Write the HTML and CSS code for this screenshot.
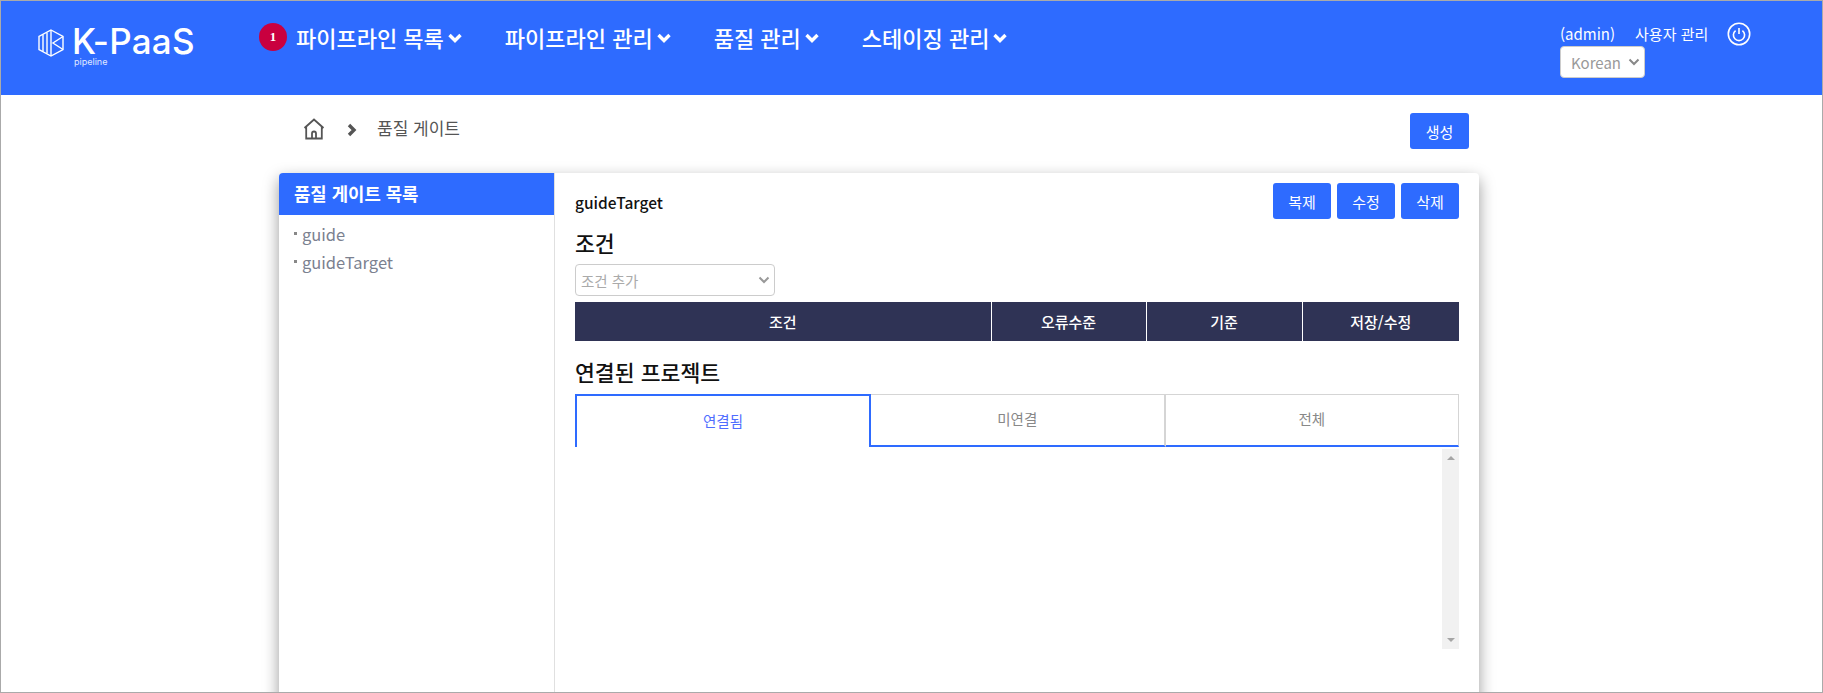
FILE: index.html
```html
<!DOCTYPE html>
<html lang="ko">
<head>
<meta charset="UTF-8">
<meta name="viewport" content="width=device-width, initial-scale=1.0">
<title>품질 게이트</title>
<link rel="stylesheet" href="styles.css">
</head>
<body>

<div class="frame">
    <header class="topbar">
        <a class="logo">
            <svg class="logo-mark" width="26" height="28" viewBox="0 0 26 28" fill="none" stroke="#fff" stroke-width="1.4">
                <path d="M13 1 L25 7.5 V20.5 L13 27 L1 20.5 V7.5 Z"/>
                <path d="M5 5.5 V22.5 M9 3.5 V24.5 M13 1 V27"/>
                <path d="M25 7.5 L15 14 L25 20.5"/>
            </svg>
            <span class="logo-text">
                <span class="logo-name">K-PaaS</span>
                <span class="logo-sub">pipeline</span>
            </span>
        </a>
        <nav class="menu">
            <span class="badge">1</span>
            <a class="menu-item">파이프라인 목록<svg class="chev" width="14" height="10" viewBox="0 0 14 10"><path d="M1.5 2 L7 7.5 L12.5 2" fill="none" stroke="#fff" stroke-width="3.4"/></svg></a>
            <a class="menu-item">파이프라인 관리<svg class="chev" width="14" height="10" viewBox="0 0 14 10"><path d="M1.5 2 L7 7.5 L12.5 2" fill="none" stroke="#fff" stroke-width="3.4"/></svg></a>
            <a class="menu-item">품질 관리<svg class="chev" width="14" height="10" viewBox="0 0 14 10"><path d="M1.5 2 L7 7.5 L12.5 2" fill="none" stroke="#fff" stroke-width="3.4"/></svg></a>
            <a class="menu-item">스테이징 관리<svg class="chev" width="14" height="10" viewBox="0 0 14 10"><path d="M1.5 2 L7 7.5 L12.5 2" fill="none" stroke="#fff" stroke-width="3.4"/></svg></a>
        </nav>
        <div class="user-box">
            <div class="user-row">
                <span>(admin)</span>
                <span class="user-manage">사용자 관리</span>
                <svg class="power" width="24" height="24" viewBox="0 0 24 24" fill="none" stroke="#fff">
                    <circle cx="12" cy="12" r="10.7" stroke-width="1.6"/>
                    <path d="M8.6 8.6 A5.6 5.6 0 1 0 15.4 8.6 M12 6 V12" stroke-width="1.6"/>
                </svg>
            </div>
            <div class="select lang">Korean<svg width="12" height="8" viewBox="0 0 12 8"><path d="M1.5 1.5 L6 6 L10.5 1.5" fill="none" stroke="#888" stroke-width="2"/></svg></div>
        </div>
    </header>

    <div class="crumb-row">
        <div class="crumbs">
            <svg class="home" width="22" height="22" viewBox="0 0 22 22" fill="none" stroke="#555" stroke-width="1.8">
                <path d="M1.5 10 L11 1.5 L20.5 10 M3.2 8.5 V20.5 H18.8 V8.5"/>
                <path d="M9 20.5 V15.5 A2 2 0 0 1 13 15.5 V20.5"/>
            </svg>
            <svg class="crumb-arrow" width="10" height="14" viewBox="0 0 10 14"><path d="M2 2 L7 7 L2 12" fill="none" stroke="#555" stroke-width="3.4"/></svg>
            <span class="crumb-text">품질 게이트</span>
        </div>
        <button class="btn btn-create">생성</button>
    </div>

    <div class="card">
        <aside class="side">
            <h3 class="side-title">품질 게이트 목록</h3>
            <ul class="side-list">
                <li>guide</li>
                <li>guideTarget</li>
            </ul>
        </aside>
        <main class="detail">
            <div class="detail-top">
                <span class="detail-name">guideTarget</span>
                <div class="btn-group">
                    <button class="btn">복제</button>
                    <button class="btn">수정</button>
                    <button class="btn">삭제</button>
                </div>
            </div>
            <h2 class="section-title">조건</h2>
            <div class="select cond">조건 추가<svg width="12" height="8" viewBox="0 0 12 8"><path d="M1.5 1.5 L6 6 L10.5 1.5" fill="none" stroke="#999" stroke-width="2"/></svg></div>
            <table class="cond-table">
                <thead>
                    <tr>
                        <th class="col-a">조건</th>
                        <th class="col-b">오류수준</th>
                        <th class="col-c">기준</th>
                        <th>저장/수정</th>
                    </tr>
                </thead>
            </table>
            <h2 class="section-title project-title">연결된 프로젝트</h2>
            <div class="tabs">
                <div class="tab active">연결됨</div>
                <div class="tab tab-mid">미연결</div>
                <div class="tab">전체</div>
            </div>
            <div class="tab-body">
                <div class="scrollbar">
                    <span class="arrow-up"></span>
                    <span class="arrow-down"></span>
                </div>
            </div>
        </main>
    </div>
</div>

</body>
</html>
```

FILE: styles.css
```css
* {
    box-sizing: border-box;
}
body {
    margin: 0;
    font-family: "Noto Sans CJK KR", "Noto Sans", sans-serif;
    background-color: #fff;
}
.frame {
    height: 693px;
    border: 1px solid #aaa;
    overflow: hidden;
}
.topbar {
    display: flex;
    height: 94px;
    background-color: #2e6bff;
    color: #fff;
}
.logo {
    display: flex;
    width: 222px;
    padding: 26px 0 0 37px;
}
.logo-mark {
    margin-right: 8px;
    margin-top: 2px;
}
.logo-text {
    display: flex;
    flex-direction: column;
}
.logo-name {
    font-family: Inter, sans-serif;
    font-size: 35px;
    font-weight: 500;
    line-height: 28px;
    letter-spacing: 0.2px;
}
.logo-sub {
    font-family: Inter, sans-serif;
    font-size: 9px;
    line-height: 12px;
    margin-top: 1px;
    margin-left: 2px;
    opacity: .85;
}
.menu {
    display: flex;
    align-items: flex-start;
    flex: 1;
    padding-top: 21px;
    padding-left: 36px;
}
.badge {
    width: 28px;
    height: 28px;
    margin-top: 1px;
    margin-right: 9px;
    border-radius: 50%;
    background-color: #c9003f;
    font-family: "Liberation Serif", serif;
    font-size: 13px;
    font-weight: bold;
    line-height: 28px;
    text-align: center;
}
.menu-item {
    display: flex;
    align-items: center;
    margin-right: 43px;
    font-size: 22px;
    font-weight: 500;
    line-height: 31px;
}
.chev {
    margin-left: 4px;
}
.user-box {
    width: 262px;
    padding-top: 20px;
    font-size: 15px;
}
.user-row {
    display: flex;
    align-items: center;
    height: 25px;
}
.user-manage {
    margin-left: 20px;
}
.power {
    margin-left: 19px;
}
.select {
    display: flex;
    align-items: center;
    justify-content: space-between;
    background-color: #fff;
    border: 1px solid #ccc;
    border-radius: 4px;
    color: #999;
}
.lang {
    width: 85px;
    height: 32px;
    padding: 0 4px 0 10px;
    font-size: 15px;
}
.crumb-row {
    display: flex;
    justify-content: space-between;
    height: 78px;
    padding: 18px 353px 0 302px;
}
.crumbs {
    display: flex;
    align-items: flex-start;
    color: #555;
}
.home {
    margin-top: 5px;
}
.crumb-arrow {
    margin: 10px 0 0 22px;
}
.crumb-text {
    margin-left: 20px;
    margin-top: 2px;
    font-size: 17px;
}
.btn {
    height: 36px;
    width: 58px;
    padding: 0;
    background-color: #2e6bff;
    color: #fff;
    border: none;
    border-radius: 3px;
    font-family: inherit;
    font-size: 15px;
}
.btn-create {
    width: 59px;
}
.card {
    display: flex;
    width: 1200px;
    height: 600px;
    margin-left: 278px;
    background-color: #fff;
    border-radius: 4px;
    box-shadow: 0 6px 16px rgba(0, 0, 0, 0.4);
}
.side {
    width: 276px;
    border-right: 1px solid #e0e0e0;
}
.side-title {
    margin: 0;
    height: 42px;
    padding-left: 15px;
    background-color: #2e6bff;
    border-radius: 4px 0 0 0;
    color: #fff;
    font-size: 17.8px;
    font-weight: 700;
    line-height: 41px;
}
.side-list {
    list-style: none;
    margin: 5px 0 0;
    padding: 0 0 0 23px;
    color: #7b8190;
    font-size: 16.5px;
    line-height: 28px;
}
.side-list li {
    position: relative;
}
.side-list li::before {
    content: "";
    position: absolute;
    left: -8px;
    top: 12px;
    width: 3px;
    height: 3px;
    background-color: #888;
}
.detail {
    flex: 1;
    padding: 10px 20px 0;
}
.detail-top {
    display: flex;
    justify-content: space-between;
    height: 45px;
}
.detail-name {
    margin-top: 9px;
    font-size: 15.5px;
    font-weight: 500;
    line-height: 20px;
    color: #111;
}
.btn-group {
    display: flex;
    gap: 6px;
}
.section-title {
    margin: 0;
    font-size: 21.6px;
    font-weight: 500;
    line-height: 29px;
    color: #111;
}
.cond {
    width: 200px;
    height: 32px;
    margin-top: 7px;
    padding: 0 4px 0 5px;
    font-size: 14.5px;
    color: #aaa;
}
.cond-table {
    width: 100%;
    height: 39px;
    margin-top: 6px;
    border-collapse: collapse;
    table-layout: fixed;
}
.cond-table th {
    padding: 0;
    background-color: #2f3355;
    color: #fff;
    font-size: 15px;
    font-weight: 500;
    border-left: 1px solid #fff;
}
.cond-table th:first-child {
    border-left: none;
}
.col-a {
    width: 416px;
}
.col-b {
    width: 155px;
}
.col-c {
    width: 156px;
}
.project-title {
    margin-top: 16px;
}
.tabs {
    display: flex;
    height: 53px;
    margin-top: 8px;
}
.tab {
    flex: 1;
    padding-top: 13px;
    border-top: 1px solid #d5d5d5;
    border-right: 1px solid #d5d5d5;
    border-bottom: 2px solid #2e6bff;
    color: #888;
    font-size: 14.5px;
    line-height: 22px;
    text-align: center;
}
.tab-mid {
    border-right-width: 2px;
}
.tab.active {
    flex: none;
    width: 296px;
    padding-top: 14px;
    border: 2px solid #2e6bff;
    border-bottom: none;
    color: #4f6dff;
}
.tab-body {
    display: flex;
    justify-content: flex-end;
    height: 200px;
    margin-top: 2px;
}
.scrollbar {
    display: flex;
    flex-direction: column;
    justify-content: space-between;
    align-items: center;
    width: 17px;
    padding: 7px 0;
    background-color: #f1f1f1;
}
.arrow-up, .arrow-down {
    width: 0;
    height: 0;
    border-left: 4px solid transparent;
    border-right: 4px solid transparent;
}
.arrow-up {
    border-bottom: 4px solid #a5a5a5;
}
.arrow-down {
    border-top: 4px solid #a5a5a5;
}
```
